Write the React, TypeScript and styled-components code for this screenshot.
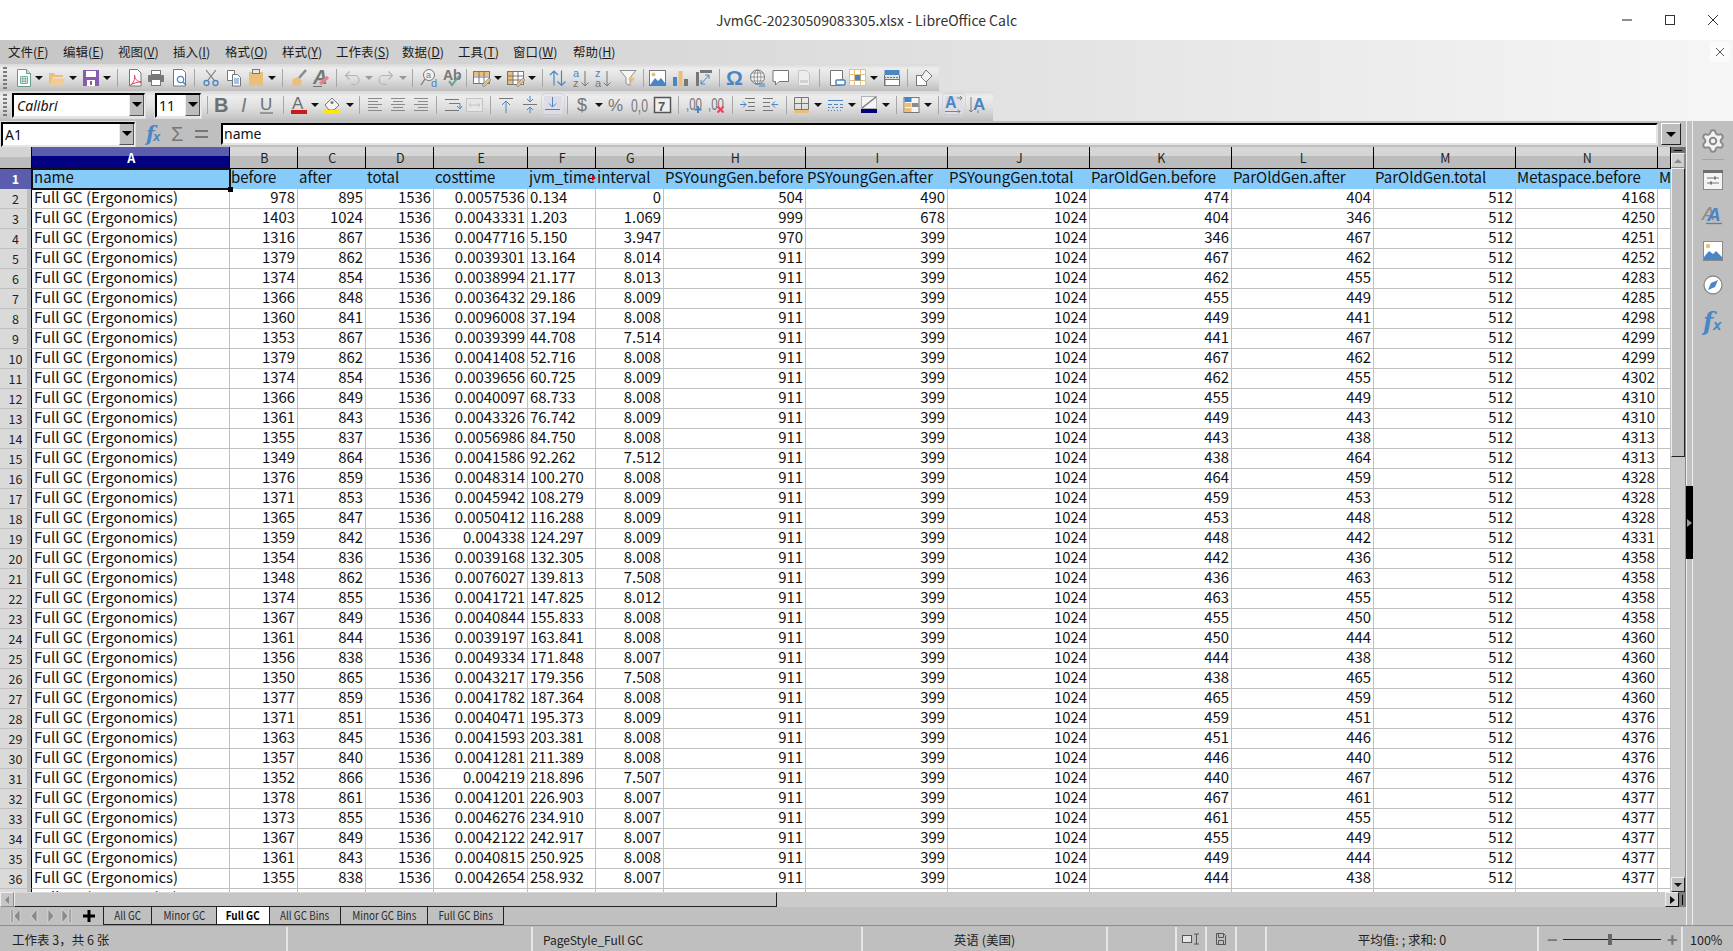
import React from "react";
import styled, { createGlobalStyle } from "styled-components";
import { Settings } from "lucide-react";

const BL = "#4a86c4", TN = "#e9bf7b", GR = "#777777", TE = "#5f9f88", PU = "#8a5aad", RD = "#e8415a", DIS = "#b4b4b4";
const FONT = `"Noto Sans CJK SC", "Noto Sans", sans-serif`;

const Global = createGlobalStyle`
  html, body { margin: 0; padding: 0; background: #c0c0c0; overflow: hidden; }
  body { font-family: ${FONT}; }
  * { box-sizing: border-box; }
`;

const Page = styled.div`
  width: 1733px; height: 951px; display: flex; flex-direction: column; overflow: hidden; background: #c0c0c0; color: #111;
`;
const TitleBar = styled.header`
  height: 40px; flex: none; background: #fff; display: flex; align-items: center; justify-content: center; position: relative;
`;
const TitleText = styled.div`font-size: 14px; color: #333;`;
const WinControls = styled.div`
  position: absolute; right: 13px; top: 14px; display: flex; gap: 29px; align-items: center;
`;
const Chrome = styled.div`
  height: 81px; flex: none; background: linear-gradient(90deg, #c6c6c6 0%, #dcdcdc 45%, #f6f6f6 100%); display: flex; flex-direction: column; position: relative;
`;
const MenuBar = styled.nav`height: 24px; flex: none; display: flex; align-items: center; font-size: 12.5px; color: #1c1c1c; padding-bottom: 2px;`;
const MenuItem = styled.span<{ $w: number }>`width: ${p => p.$w}px; flex: none; white-space: nowrap; u { text-underline-offset: 1px; }`;
const CloseDoc = styled.div`
  position: absolute; right: 3px; top: 2px; width: 20px; height: 20px; background: #fbfbfb; display: flex; align-items: center; justify-content: center;
`;
const Strip = styled.div<{ $w: number; $h: number; $pb: number }>`
  width: ${p => p.$w}px; height: ${p => p.$h}px; padding-bottom: ${p => p.$pb}px; flex: none; display: flex; align-items: center;
  background: linear-gradient(180deg, #d9d9d9 0%, #ededed 18%, #dfdfdf 55%, #c6c6c6 90%, #bdbdbd 100%);
`;
const Slot = styled.div<{ $w: number }>`
  width: ${p => p.$w}px; flex: none; height: 100%; display: flex; align-items: center;
`;
const IconBox = styled.div<{ $active?: boolean }>`
  width: 18px; height: 18px; flex: none; display: flex;
  ${p => p.$active ? "background:#dcdde6; outline: 1px solid #d0d3e4; outline-offset: 2px; border-radius:1px;" : ""}
`;
const Drop = styled.div<{ $off?: boolean }>`
  width: 0; height: 0; border-left: 4px solid transparent; border-right: 4px solid transparent; border-top: 4px solid ${p => p.$off ? "#9a9a9a" : "#111"};
`;
const Sep = styled.div`width: 1px; height: 18px; background: #a6a6a6;`;
const Handle = styled.div`
  width: 4px; height: 22px; background: repeating-linear-gradient(180deg, #7a7a7a 0 2px, transparent 2px 4px);
`;
const Combo = styled.div<{ $w: number }>`
  width: ${p => p.$w}px; height: 25px; flex: none; display: flex; align-items: stretch; background: #fff;
  border-top: 2px solid #000; border-left: 2px solid #000; border-right: 1px solid #eee; border-bottom: 2px solid #e6e6e6;
  outline: 1px solid #dedede;
`;
const ComboText = styled.div<{ $it?: boolean }>`
  flex: 1; min-width: 0; font-size: 14px; line-height: 21px; padding-left: ${p => p.$it ? 3 : 2}px; font-style: ${p => p.$it ? "italic" : "normal"}; color: #111; white-space: nowrap; overflow: hidden;
  font-family: "Noto Sans", sans-serif;
`;
const ComboBtn = styled.div`
  width: 15px; flex: none; background: #bdbdbd; display: flex; align-items: center; justify-content: center;
  border-left: 1px solid #eee; border-right: 1px solid #555; border-bottom: 1px solid #555;
`;
const BlackDrop = styled.div`width: 0; height: 0; border-left: 5px solid transparent; border-right: 5px solid transparent; border-top: 5px solid #000;`;

const Body = styled.div`height: 804px; flex: none; display: flex;`;
const Workspace = styled.div`width: 1686px; flex: none; display: flex; flex-direction: column;`;
const NameBar = styled.div`height: 26px; flex: none; display: flex; align-items: center; background: #bfbfbf;`;
const NameCombo = styled(Combo)`margin-left: 1px; height: 25px;`;
const FormulaTools = styled.div`width: 86px; flex: none; display: flex; align-items: center; height: 100%; padding-left: 7px;`;
const FormulaInput = styled.div`
  width: 1437px; height: 22px; flex: none; background: #fff; border-top: 2px solid #000; border-left: 2px solid #000; border-bottom: 2px solid #e4e4e4; border-right: 2px solid #e4e4e4;
  font-size: 14px; line-height: 18px; padding-left: 1px; color: #111; font-family: "Noto Sans", sans-serif;
`;
const FormulaBtn = styled.div`
  width: 20px; height: 22px; margin-left: 3px; flex: none; background: #bdbdbd; border: 1px solid #fff; border-right: 1px solid #222; border-bottom: 1px solid #222; display: flex; align-items: center; justify-content: center;
`;
const FBig = styled.span`width: 24px; display: flex; justify-content: center;`;

const Sheet = styled.div`height: 745px; flex: none; display: flex;`;
const GridArea = styled.div`width: 1671px; flex: none; overflow: hidden; background: #fff;`;
const COLS = "32px 198px 68px 68px 68px 94px 68px 68px 142px 142px 142px 142px 142px 142px 142px 13px";
const HeadRow = styled.div`
  display: grid; grid-template-columns: ${COLS}; height: 22px; border-bottom: 1px solid #000;
`;
const Corner = styled.div`background: linear-gradient(180deg, #d4d4d4 0 50%, #bcbcbc 50%); border-right: 1px solid #000; `;
const ColHead = styled.div<{ $sel?: boolean }>`
  font-size: 12.5px; display: flex; align-items: center; justify-content: center; padding-top: 2px; padding-left: 1.5px; line-height: 1;
  color: ${p => p.$sel ? "#fff" : "#1f1f1f"}; font-weight: ${p => p.$sel ? 700 : 400};
  border-right: 1px solid #000;
  background: ${p => p.$sel ? "linear-gradient(180deg, #5c5cad 0 42%, #000080 42%)" : "linear-gradient(180deg, #d6d6d6 0 45%, #bcbcbc 45%)"};
`;
const Row = styled.div`display: grid; grid-template-columns: ${COLS}; height: 20px;`;
const RowHead = styled.div<{ $sel?: boolean }>`
  font-size: 12.5px; display: flex; align-items: center; justify-content: center; padding-top: 1px; line-height: 1;
  color: ${p => p.$sel ? "#fff" : "#1f1f1f"}; font-weight: ${p => p.$sel ? 700 : 400};
  border-right: 1px solid #000; border-bottom: 1px solid ${p => p.$sel ? "#5c5cad" : "#c0c0c0"};
  background: ${p => p.$sel ? "#5c5cad" : "linear-gradient(90deg, #dadada 0 88%, #bdbdbd 88%)"};
`;
const Cell = styled.div<{ $num?: boolean }>`
  font-size: 14.9px; line-height: 15px; white-space: nowrap;
  text-align: ${p => p.$num ? "right" : "left"}; padding: 0 ${p => p.$num ? "2px" : "1px"} 0 ${p => p.$num ? "0" : "2px"};
  color: #111; font-family: ${FONT}; background: #fff;
  border-right: 1px solid #c0c0c0; border-bottom: 1px solid #c0c0c0;
`;
const HeadCell = styled.div`
  position: relative; min-width: 0; font-size: 15px; line-height: 15px; white-space: nowrap; padding-left: 1px;
  color: #111; font-family: ${FONT}; background: #87cbfb;
`;
const Clip = styled.div`overflow: hidden; width: 100%; height: 23px; margin-top: -4px; padding-top: 4px;`;
const SelCell = styled(HeadCell)`padding-left: 2px; outline: 2px solid #111; outline-offset: -1px; z-index: 2;`;
const FillHandle = styled.div`position: absolute; right: -3px; bottom: -3px; width: 5px; height: 5px; background: #000; z-index: 3;`;
const Overflow = styled.div`
  position: absolute; right: 0; top: 6px; width: 0; height: 0; border-left: 4px solid #e00000; border-top: 3.5px solid transparent; border-bottom: 3.5px solid transparent;
`;

const VScroll = styled.div`width: 15px; flex: none; display: flex; flex-direction: column; background: #c9c9c9; border-right: 1px solid #888;`;
const VSplit = styled.div`height: 6px; flex: none; background: #6e6e6e; display:flex; align-items:center; justify-content:center; &::after{content:""; width:8px; height:1px; background:#000;}`;
const VBtn = styled.div<{ $dark?: boolean }>`
  height: 15px; flex: none; display: flex; align-items: center; justify-content: center; background: ${p => p.$dark ? "#bdbdbd" : "#cfcfcf"};
  border-top: 1px solid #eee; border-left: 1px solid #eee; border-right: 1px solid ${p => p.$dark ? "#222" : "#888"}; border-bottom: 1px solid ${p => p.$dark ? "#222" : "#888"};
`;
const VThumb = styled.div`height: 289px; flex: none; background: #bcbcbc; border-top:1px solid #eee; border-left:1px solid #eee; border-right: 1px solid #222; border-bottom: 1px solid #222;`;
const VTrack = styled.div`flex: 1;`;
const TriUp = styled.div<{ $c?: string }>`width:0;height:0;border-left:4px solid transparent;border-right:4px solid transparent;border-bottom:4px solid ${p => p.$c ?? "#8a8a8a"};`;
const TriDown = styled.div`width:0;height:0;border-left:4px solid transparent;border-right:4px solid transparent;border-top:4px solid #111;`;

const HScroll = styled.div`height: 15px; flex: none; display: flex; background: #cbcbcb;`;
const HBtn = styled.div<{ $dark?: boolean }>`
  width: 14px; flex: none; display: flex; align-items: center; justify-content: center; background: ${p => p.$dark ? "#cfcfcf" : "#c6c6c6"};
  border-top: 1px solid #eee; border-left: 1px solid #eee; border-right: 1px solid ${p => p.$dark ? "#111" : "#8a8a8a"}; border-bottom: 1px solid ${p => p.$dark ? "#111" : "#8a8a8a"};
`;
const HThumb = styled.div`width: 763px; flex: none; background: #c6c6c6; border-bottom: 1px solid #222; border-right: 1px solid #222; border-left: 1px solid #eee; border-top: 1px solid #d8d8d8;`;
const HTrack = styled.div`flex: 1;`;
const HSplit = styled.div`width: 7px; flex: none; background: #7e7e7e; display:flex; align-items:center; justify-content:center; &::after{content:""; width:1px; height:10px; background:#000;}`;
const TriL = styled.div<{ $c?: string }>`width:0;height:0;border-top:4px solid transparent;border-bottom:4px solid transparent;border-right:4px solid ${p => p.$c ?? "#8a8a8a"};`;
const TriR = styled.div`width:0;height:0;border-top:4px solid transparent;border-bottom:4px solid transparent;border-left:5px solid #111;`;

const TabBar = styled.div`height: 18px; flex: none; display: flex; background: #c0c0c0;`;
const TabNav = styled.div`width: 103px; flex: none; display: flex; align-items: center; padding-left: 10px;`;
const Tab = styled.div<{ $w: number; $on?: boolean; $last?: boolean }>`
  width: ${p => p.$w}px; flex: none; height: 18px; display: flex; justify-content: center;
  background: ${p => p.$on ? "#fff" : "#c0c0c0"}; color: ${p => p.$on ? "#000" : "#2a2a2a"}; font-weight: ${p => p.$on ? 700 : 400};
  border-left: 1px solid #222; border-right: ${p => p.$last ? "1px solid #222" : "none"}; border-bottom: 1px solid #222;
`;
const TabLabel = styled.span`
  display: inline-block; flex: none; font-size: 11.5px; line-height: 17px; transform: scaleX(0.86); transform-origin: center; white-space: nowrap;
`;

const Splitter = styled.div`
  width: 7px; flex: none; position: relative; background: #c0c0c0; border-left: 1px solid #efefef; border-right: 1px solid #efefef;
`;
const SplitKnob = styled.div`
  position: absolute; left: -1px; right: -1px; top: 365px; height: 73px; background: #000; display: flex; align-items: center; justify-content: center;
  &::after { content: ""; width:0; height:0; border-top:4px solid transparent; border-bottom:4px solid transparent; border-left:5px solid #9a9a9a; }
`;
const Sidebar = styled.aside`
  width: 40px; flex: none; background: #bfbfbf; display: flex; flex-direction: column; align-items: center; padding-top: 10px;
`;
const SideBtn = styled.div<{ $mb: number }>`width: 20px; height: 20px; margin-bottom: ${p => p.$mb}px; display: flex; align-items: center; justify-content: center;`;
const SideSep = styled.div`width: 22px; height: 1px; background: #a4a4a4; margin-bottom: 10px;`;
const Gear = styled(Settings)`flex: none;`;

const Status = styled.footer`
  height: 26px; flex: none; display: flex; background: #bfbfbf; border-top: 1px solid #8c8c8c; font-size: 12.5px; color: #222;
`;
const StatusCell = styled.div<{ $w: number; $center?: boolean; $pl?: number; $end?: boolean }>`
  width: ${p => p.$w}px; flex: none; height: 24px; margin-top: 1px; display: flex; align-items: center; white-space: nowrap;
  justify-content: ${p => p.$center ? "center" : "flex-start"}; padding-left: ${p => p.$pl ?? 0}px;
  border-right: ${p => p.$end ? "none" : "2px solid #e6e6e6"};
`;
const PageStyleCell = styled(StatusCell)`font-size: 12px;`;
const ZoomCell = styled(StatusCell)`gap: 6px;`;
const ZoomSlider = styled.div`width: 98px; height: 1px; background: #222; position: relative;`;
const ZoomKnob = styled.div`position: absolute; left: 45px; top: -5px; width: 4px; height: 11px; background: #666;`;
const ZoomSign = styled.div`font-size: 18px; font-weight: 700; color: #777; width: 10px; text-align: center; line-height: 1;`;

const Svg = ({ children, s = 18 }: { children: React.ReactNode; s?: number }) => (
  <svg width={s} height={s} viewBox={`0 0 ${s} ${s}`} fill="none" style={{ overflow: "visible", display: "block" }}>{children}</svg>
);
const T = ({ ff, children, ...p }: any) => <text fontFamily={ff ?? "'Liberation Sans', sans-serif"} {...p}>{children}</text>;

const icons: Record<string, React.ReactNode> = {
  new: <><path d="M2.5 .5h9l4 4v13h-13z" fill="#fff" stroke={TE} /><path d="M11.5 .5v4h4" fill="#cfe6dc" stroke={TE} /><path d="M5.5 7.5h7v7h-7zM5.5 9.8h7M5.5 12.2h7M7.8 7.5v7M10.2 7.5v7" stroke={TE} strokeWidth=".8" /></>,
  open: <><path d="M1 15V4h5l1.5 2H15v2H5L3 15z" fill={TN} /><path d="M4 9.5h13L15 16H1.5z" fill="#f0cd94" /></>,
  save: <><rect x="1" y="1" width="16" height="16" fill={PU} /><rect x="4" y="2" width="10" height="6" fill="#fff" /><rect x="5" y="11" width="8" height="6" fill="#fff" /><rect x="8" y="12" width="2" height="4" fill={PU} /></>,
  pdf: <><path d="M3.5 .5h8l3.5 3.5v13h-11.5z" fill="#fff" stroke={GR} /><path d="M4.5 16c3-2 5-6 4-10 0 4 2.500 6.500 7 7-4 0-8 1-11 3z" stroke={RD} fill="#fff" /></>,
  print: <><rect x="4.500" y="1.500" width="9" height="4" fill="#fff" stroke={GR} /><rect x="1" y="6" width="16" height="7" rx="1" fill={GR} /><rect x="4.500" y="10.500" width="9" height="6" fill="#fff" stroke={GR} /></>,
  preview: <><path d="M2.500 .5h9l3 3v13.500h-12z" fill="#fff" stroke={GR} /><circle cx="9.500" cy="10.500" r="3.200" fill="#fff" stroke={BL} strokeWidth="1.200" /><path d="M12 13l3 3" stroke={BL} strokeWidth="1.500" /></>,
  cut: <><path d="M4 1l8 10M14 1L6 11" stroke={GR} strokeWidth="1.100" /><circle cx="4.500" cy="14" r="2.500" stroke={BL} strokeWidth="1.300" /><circle cx="13.500" cy="14" r="2.500" stroke={BL} strokeWidth="1.300" /></>,
  copy: <><path d="M2.500 1.500h7v10h-7z" fill="#fff" stroke={GR} /><path d="M7.500 5.500h5l3 3v8.500h-8z" fill="#fff" stroke={GR} /><path d="M9 10h5M9 12h5M9 14h5" stroke={BL} /></>,
  paste: <><rect x="2" y="3" width="14" height="14" fill={TN} /><rect x="5.500" y=".5" width="7" height="4" fill="#e8e8e8" stroke={GR} /></>,
  brush: <><path d="M16 1L9 9" stroke="#8a8a8a" strokeWidth="2.500" /><path d="M3 10l5-2 4 4-2 5H1l2-3-1-1.500z" fill={TN} /></>,
  clear: <><T x="1" y="15" fontSize="20" fontWeight="700" fontStyle="italic" fill={GR}>A</T><path d="M8 15l8-7" stroke="#e87f92" strokeWidth="3.500" /><path d="M1 17.500h9" stroke={GR} /></>,
  undo: <path d="M5.500 2.500L1.500 6.500l4 4M1.500 6.500h9a4.500 4.500 0 0 1 0 9H7" stroke={DIS} strokeWidth="1.200" />,
  redo: <path d="M12.500 2.500l4 4-4 4M16.500 6.500h-9a4.500 4.500 0 0 0 0 9H11" stroke={DIS} strokeWidth="1.200" />,
  find: <><circle cx="9" cy="6" r="5.500" fill="#f2f2f2" stroke={GR} /><path d="M5 10L1 16" stroke={GR} strokeWidth="1.300" /><T x="6" y="9" fontSize="9" fill={GR}>a</T><T x="11" y="18" fontSize="11" fill={BL}>d</T></>,
  spell: <><T x="0" y="11" fontSize="14" fontWeight="700" fill={GR}>Ab</T><path d="M6 12l3 4 7-9" stroke="#5ea88f" strokeWidth="2" /></>,
  rows: <><rect x=".5" y="2.500" width="16" height="12" fill="#fff" stroke={GR} /><rect x="1" y="3" width="15" height="4" fill={TN} /><path d="M6 3v11M11 3v11M1 8h15" stroke={GR} /><path d="M9 16l7-7 2 2-7 7z" fill={TN} stroke={GR} strokeWidth=".6" /></>,
  cols: <><rect x=".5" y="2.500" width="16" height="13" fill="#fff" stroke={GR} /><rect x="1" y="3" width="5" height="12" fill={TN} /><path d="M6 3v12M11 3v12M1 7h15M1 11h15" stroke={GR} /><path d="M9 16l7-7 2 2-7 7z" fill={TN} stroke={GR} strokeWidth=".6" /></>,
  sort: <path d="M5 16.500V2M1 6l4-4 4 4M12.500 1.500v15M8.500 12.500l4 4 4-4" stroke={BL} strokeWidth="1.200" />,
  asc: <><T x="0" y="8" fontSize="11" fill={BL}>a</T><T x="0" y="17.500" fontSize="11" fill={GR}>z</T><path d="M12 2v15M8.500 13.500l3.500 3.500 3.500-3.500" stroke={GR} /></>,
  desc: <><T x="0" y="8" fontSize="11" fill={BL}>z</T><T x="0" y="17.500" fontSize="11" fill={GR}>a</T><path d="M12 2v15M8.500 13.500l3.500 3.500 3.500-3.500" stroke={GR} /></>,
  filter: <><path d="M1 1.500h16l-6 7v8l-4-2v-6z" fill="#f6f6f6" stroke="#8f8f8f" /><path d="M14 5l-5 6h3l-2 6 6-8h-3z" fill={TN} /></>,
  image: <><rect x=".5" y="1.500" width="16" height="15" fill="#fff" stroke={GR} /><circle cx="4.500" cy="5.500" r="2" fill={TN} /><path d="M1 16l5-7 3 3 3-3 4 5v2z" fill={BL} /></>,
  chart: <><rect x="1" y="8" width="4" height="9" fill={BL} /><rect x="6.500" y="2" width="4" height="15" fill={TN} /><rect x="12" y="10" width="4" height="7" fill={GR} /></>,
  pivot: <><rect x="1" y="3" width="3" height="14" fill={GR} /><rect x="5" y="1" width="12" height="3" fill={GR} /><path d="M6 15l8-9M6 11v4h4M14 10V6h-4" stroke={BL} /></>,
  omega: <T x="-1" y="16" fontSize="21" fontWeight="700" fill={BL}>Ω</T>,
  link: <><circle cx="8.500" cy="8" r="7" fill="#f4f4f4" stroke={GR} /><path d="M1.500 8h14M8.500 1v14M3 4h11M3 12h11" stroke={GR} strokeWidth=".7" /><ellipse cx="8.500" cy="8" rx="3.500" ry="7" stroke={GR} strokeWidth=".7" /><path d="M6 15h10M10 17h6" stroke={BL} strokeWidth="1.200" /></>,
  comment: <path d="M1 1.500h15.500v11H7l-3.500 3.500v-3.500H1z" fill="#fff" stroke={GR} />,
  headers: <><path d="M3.500 1.500h8l3 3v12h-11z" fill="#ededed" stroke="#c6c6c6" /><rect x="5" y="11" width="8" height="3" fill="#d0d0d0" /></>,
  printarea: <><path d="M2.500 1.500h12v9h-2v6h-10z" fill="#fff" stroke={GR} /><rect x="8" y="11" width="9" height="5" rx="1" fill="#fff" stroke={BL} strokeWidth="1.500" /></>,
  freeze: <><rect x=".5" y=".5" width="16" height="16" fill="#fff" stroke={TN} /><path d="M5.500 1v15M11.500 1v15M1 5.500h15M1 11.500h15" stroke={TN} /><rect x="6" y="6" width="5.500" height="5.500" fill={BL} /></>,
  split: <><rect x=".5" y="1" width="15" height="5" fill={BL} /><path d="M0 8.500h16" stroke={GR} strokeDasharray="2 1" /><rect x="1" y="10.500" width="14.500" height="6" fill="#fff" stroke={GR} /><path d="M.5 6v11M15.500 6v11" stroke={GR} /></>,
  shapes: <><rect x="1.500" y="6.500" width="10" height="10" fill="#fff" stroke={GR} /><path d="M11 1l6 6-6 6-5-5z" fill="#f2f2f2" stroke={GR} /></>,
  B: <T x="0" y="15.500" fontSize="20" fontWeight="700" fill="#6f6f6f">B</T>,
  I: <T x="3" y="15.500" fontSize="20" fontStyle="italic" fill="#7d7d7d">I</T>,
  U: <><T x="1" y="13.500" fontSize="17" fill="#6f6f6f">U</T><path d="M1 17h13" stroke="#6f6f6f" strokeWidth="1.200" /></>,
  fcolor: <><T x="2" y="13" fontSize="17" fill="#6f6f6f">A</T><rect x="1" y="14" width="16" height="4" fill="#cc1a1a" /></>,
  hl: <><path d="M2 9l7-7 7 7-5 5H6z" fill="#f4f4f4" stroke={GR} /><circle cx="9" cy="6.500" r="1.500" fill={GR} /><rect x="1" y="14" width="16" height="4" fill="#ffe600" /></>,
  left: <path d="M2 2.500h14M2 5.500h10M2 8.500h14M2 11.500h10M2 14.500h14" stroke="#8a8a8a" />,
  center: <path d="M2 2.500h14M4 5.500h10M2 8.500h14M4 11.500h10M2 14.500h14" stroke="#8a8a8a" />,
  right: <path d="M2 2.500h14M6 5.500h10M2 8.500h14M6 11.500h10M2 14.500h14" stroke="#8a8a8a" />,
  wrap: <><path d="M1 3.500h14M1 14.500h14" stroke={GR} /><path d="M5 7.500h11v5M13 10l3 3 2-3" stroke={BL} /></>,
  merge: <><rect x=".5" y="2.500" width="16" height="13" fill="#e6e6e6" stroke="#c4c4c4" /><path d="M3 9h11M3 9l2-2M3 9l2 2M14 9l-2-2M14 9l-2 2" stroke="#c4c4c4" /></>,
  top: <><path d="M2 2.500h14" stroke={GR} /><path d="M9 17V5M5 9l4-4 4 4" stroke={BL} /></>,
  mid: <><path d="M2 8.500h14" stroke={GR} /><path d="M9 0v6M6 3l3 3 3-3M9 17v-6M6 14l3-3 3 3" stroke={BL} /></>,
  bot: <><path d="M1 13.500h15" stroke={GR} /><path d="M8.500 1v10M5 7.500l3.500 3.500 3.500-3.500" stroke={BL} /></>,
  dollar: <T x="2" y="15" fontSize="18" fill={GR}>$</T>,
  pct: <T x="0" y="15" fontSize="17" fill={GR}>%</T>,
  num: <T x="0" y="16" fontSize="19" fill={GR} textLength="17" lengthAdjust="spacingAndGlyphs">0,0</T>,
  date: <><rect x=".5" y="1.500" width="16" height="15" fill="#efefef" stroke="#555" strokeWidth="1.500" /><T x="4" y="15" fontSize="13" fontWeight="700" fill="#555">7</T></>,
  adddec: <><T x="0" y="14" fontSize="17" fill={GR} textLength="16" lengthAdjust="spacingAndGlyphs">,00</T><path d="M12 10v7M8.500 13.500h7" stroke={BL} strokeWidth="2" /></>,
  deldec: <><T x="0" y="14" fontSize="17" fill={GR} textLength="16" lengthAdjust="spacingAndGlyphs">,00</T><path d="M9.500 10.500l6 6M15.500 10.500l-6 6" stroke={RD} strokeWidth="2" /></>,
  indent: <><path d="M6 2.500h10M9 6.500h7M9 10.500h7M6 14.500h10" stroke={GR} /><path d="M1 8.500h6M4 5.500l3 3-3 3" stroke={BL} /></>,
  outdent: <><path d="M1 2.500h10M1 6.500h7M1 10.500h7M1 14.500h10" stroke={GR} /><path d="M16 8.500h-6M13 5.500l-3 3 3 3" stroke={BL} /></>,
  borders: <><path d="M1.500 1.500h14v12h-14zM8.500 1.500v12M1.500 7.500h14" stroke={GR} /><rect x="1" y="14" width="15" height="3" fill={TN} /></>,
  bstyle: <path d="M1 4.500h15M1 8.500h4M7 8.500h4M13 8.500h3M1 11.500h2M5 11.500h2M9 11.500h2M13 11.500h3M1 14.500h1M4 14.500h1M7 14.500h1M10 14.500h1M13 14.500h1" stroke={BL} />,
  bcolor: <><rect x=".5" y=".5" width="15" height="12" fill="#f5f5f5" stroke="#b4b4b4" /><path d="M1 12L15 1" stroke={GR} strokeWidth="1.300" /><rect y="13" width="16" height="4" fill="#000080" /></>,
  cond: <><rect x="1" y="1.500" width="15" height="15" fill="#f5f5f5" stroke={GR} /><rect x="1.500" y="2" width="7" height="4" fill={BL} /><rect x="1.500" y="7" width="7" height="4" fill={TN} /><rect x="1.500" y="12" width="7" height="4" fill={TN} /><rect x="9" y="7" width="6.500" height="4" fill="#8a8a8a" /></>,
  htext: <><T x="0" y="12" fontSize="16" fontWeight="700" fill={BL}>A</T><path d="M12 2h5M15 0l2 2-2 2M0 15.500h15M13 13.500l2 2-2 2" stroke={GR} strokeWidth=".9" /></>,
  vtext: <><T x="4" y="14" fontSize="17" fontWeight="700" fill={BL}>A</T><path d="M2 1v15M0 14l2 2 2-2M9 14v3" stroke={GR} strokeWidth=".9" /></>,
};

type Item = [number, string];
const STRIP1: Item[] = [[3,"handle"],[15,"new"],[35,"arrow"],[48,"open"],[69,"arrow"],[82,"save"],[103,"arrow"],[117,"sep"],[126,"pdf"],[147,"print"],[171,"preview"],[194,"sep"],[202,"cut"],[225,"copy"],[247,"paste"],[268,"arrow"],[282,"sep"],[290,"brush"],[312,"clear"],[336,"sep"],[344,"undo"],[365,"off"],[376,"redo"],[399,"off"],[412,"sep"],[420,"find"],[443,"spell"],[466,"sep"],[473,"rows"],[494,"arrow"],[507,"cols"],[528,"arrow"],[542,"sep"],[549,"sort"],[573,"asc"],[595,"desc"],[619,"filter"],[643,"sep"],[649,"image"],[672,"chart"],[695,"pivot"],[719,"sep"],[727,"omega"],[749,"link"],[772,"comment"],[795,"headers"],[819,"sep"],[828,"printarea"],[849,"freeze"],[870,"arrow"],[884,"split"],[907,"sep"],[915,"shapes"],[939,""]];
const STRIP2: Item[] = [[3,"handle"],[12,"font"],[155,"size"],[207,"sep"],[214,"B"],[238,"I"],[259,"U"],[283,"sep"],[290,"fcolor"],[311,"arrow"],[323,"hl"],[346,"arrow"],[359,"sep"],[366,"left"],[389,"center"],[412,"right"],[436,"sep"],[444,"wrap"],[466,"merge"],[490,"sep"],[497,"top"],[521,"mid"],[544,"bot*"],[567,"sep"],[575,"dollar"],[595,"arrow"],[608,"pct"],[631,"num"],[654,"date"],[678,"sep"],[686,"adddec"],[708,"deldec"],[732,"sep"],[739,"indent"],[762,"outdent"],[786,"sep"],[793,"borders"],[814,"arrow"],[827,"bstyle"],[848,"arrow"],[861,"bcolor"],[882,"arrow"],[896,"sep"],[903,"cond"],[924,"arrow"],[938,"sep"],[945,"htext*"],[969,"vtext"],[993,""]];

function renderItem(kind: string) {
  if (kind === "handle") return <Handle />;
  if (kind === "sep") return <Sep />;
  if (kind === "arrow") return <Drop />;
  if (kind === "off") return <Drop $off />;
  if (kind === "font") return <Combo $w={133}><ComboText $it>Calibri</ComboText><ComboBtn><BlackDrop /></ComboBtn></Combo>;
  if (kind === "size") return <Combo $w={46}><ComboText>11</ComboText><ComboBtn><BlackDrop /></ComboBtn></Combo>;
  const active = kind.endsWith("*");
  const name = active ? kind.slice(0, -1) : kind;
  return <IconBox $active={active}><Svg>{icons[name]}</Svg></IconBox>;
}

const ToolStrip = ({ items, h, pb }: { items: Item[]; h: number; pb: number }) => (
  <Strip $w={items[items.length - 1][0]} $h={h} $pb={pb}>
    <Slot $w={items[0][0]} />
    {items.slice(0, -1).map(([x, k], i) => (
      <Slot key={i} $w={items[i + 1][0] - x}>{renderItem(k)}</Slot>
    ))}
  </Strip>
);

const MENU: [string, string, number][] = [["文件","F",55],["编辑","E",55],["视图","V",55],["插入","I",52],["格式","O",57],["样式","Y",54],["工作表","S",66],["数据","D",56],["工具","T",55],["窗口","W",60],["帮助","H",60]];

const HEAD = ["name","before","after","total","costtime","jvm_time","interval","PSYoungGen.before","PSYoungGen.after","PSYoungGen.total","ParOldGen.before","ParOldGen.after","ParOldGen.total","Metaspace.before","M"];
const LETTERS = "ABCDEFGHIJKLMN".split("");

const RAW = `978 895 0.0057536 0.134 0 504 490 474 404 4168
1403 1024 0.0043331 1.203 1.069 999 678 404 346 4250
1316 867 0.0047716 5.150 3.947 970 399 346 467 4251
1379 862 0.0039301 13.164 8.014 911 399 467 462 4252
1374 854 0.0038994 21.177 8.013 911 399 462 455 4283
1366 848 0.0036432 29.186 8.009 911 399 455 449 4285
1360 841 0.0096008 37.194 8.008 911 399 449 441 4298
1353 867 0.0039399 44.708 7.514 911 399 441 467 4299
1379 862 0.0041408 52.716 8.008 911 399 467 462 4299
1374 854 0.0039656 60.725 8.009 911 399 462 455 4302
1366 849 0.0040097 68.733 8.008 911 399 455 449 4310
1361 843 0.0043326 76.742 8.009 911 399 449 443 4310
1355 837 0.0056986 84.750 8.008 911 399 443 438 4313
1349 864 0.0041586 92.262 7.512 911 399 438 464 4313
1376 859 0.0048314 100.270 8.008 911 399 464 459 4328
1371 853 0.0045942 108.279 8.009 911 399 459 453 4328
1365 847 0.0050412 116.288 8.009 911 399 453 448 4328
1359 842 0.004338 124.297 8.009 911 399 448 442 4331
1354 836 0.0039168 132.305 8.008 911 399 442 436 4358
1348 862 0.0076027 139.813 7.508 911 399 436 463 4358
1374 855 0.0041721 147.825 8.012 911 399 463 455 4358
1367 849 0.0040844 155.833 8.008 911 399 455 450 4358
1361 844 0.0039197 163.841 8.008 911 399 450 444 4360
1356 838 0.0049334 171.848 8.007 911 399 444 438 4360
1350 865 0.0043217 179.356 7.508 911 399 438 465 4360
1377 859 0.0041782 187.364 8.008 911 399 465 459 4360
1371 851 0.0040471 195.373 8.009 911 399 459 451 4376
1363 845 0.0041593 203.381 8.008 911 399 451 446 4376
1357 840 0.0041281 211.389 8.008 911 399 446 440 4376
1352 866 0.004219 218.896 7.507 911 399 440 467 4376
1378 861 0.0041201 226.903 8.007 911 399 467 461 4377
1373 855 0.0046276 234.910 8.007 911 399 461 455 4377
1367 849 0.0042122 242.917 8.007 911 399 455 449 4377
1361 843 0.0040815 250.925 8.008 911 399 449 444 4377
1355 838 0.0042654 258.932 8.007 911 399 444 438 4377`;

const ROWS = RAW.split("\n").map(l => {
  const [b, a, cost, jvm, iv, yb, ya, ob, oa, m] = l.split(" ");
  return [b, a, "1536", cost, jvm, iv, yb, ya, "1024", ob, oa, "512", m];
});

const TABS: [string, number][] = [["All GC",48],["Minor GC",65],["Full GC",53],["All GC Bins",71],["Minor GC Bins",87],["Full GC Bins",77]];

const NavIcon = ({ d }: { d: string }) => (
  <svg width="17" height="16" viewBox="0 0 17 16"><path d={d} fill="#8a8a8a" stroke="#e8e8e8" strokeWidth=".6" /></svg>
);

export default function App() {
  return (
    <Page>
      <Global />
      <TitleBar>
        <TitleText>JvmGC-20230509083305.xlsx - LibreOffice Calc</TitleText>
        <WinControls>
          <svg width="14" height="12" viewBox="0 0 14 12"><path d="M2 6h10" stroke="#333" strokeWidth="1.100" /></svg>
          <svg width="14" height="12" viewBox="0 0 14 12"><rect x="2.500" y="1.500" width="9" height="9" fill="none" stroke="#333" /></svg>
          <svg width="14" height="12" viewBox="0 0 14 12"><path d="M2 1l10 10M12 1L2 11" stroke="#333" /></svg>
        </WinControls>
      </TitleBar>
      <Chrome>
        <MenuBar>
          <MenuItem $w={8} />
          {MENU.map(([t, k, w]) => <MenuItem key={k} $w={w}>{t}(<u>{k}</u>)</MenuItem>)}
        </MenuBar>
        <CloseDoc><svg width="10" height="10" viewBox="0 0 10 10"><path d="M1 1l8 8M9 1L1 9" stroke="#555" /></svg></CloseDoc>
        <ToolStrip items={STRIP1} h={27} pb={0} />
        <ToolStrip items={STRIP2} h={30} pb={2} />
      </Chrome>
      <Body>
        <Workspace>
          <NameBar>
            <NameCombo $w={134}><ComboText>A1</ComboText><ComboBtn><BlackDrop /></ComboBtn></NameCombo>
            <FormulaTools>
              <FBig><Svg s={20}><T x="2" y="17" fontSize="20" fontWeight="700" fontStyle="italic" fill={BL} ff="'DejaVu Serif', serif">f</T><T x="9" y="17" fontSize="13" fontWeight="700" fontStyle="italic" fill={BL}>x</T></Svg></FBig>
              <FBig><Svg s={20}><T x="3" y="17" fontSize="20" fill={GR}>Σ</T></Svg></FBig>
              <FBig><Svg s={20}><path d="M3 7h13M3 13h13" stroke={GR} strokeWidth="2" /></Svg></FBig>
            </FormulaTools>
            <FormulaInput>name</FormulaInput>
            <FormulaBtn><BlackDrop /></FormulaBtn>
          </NameBar>
          <Sheet>
            <GridArea>
              <HeadRow>
                <Corner />
                {LETTERS.map((c, i) => <ColHead key={c} $sel={i === 0}>{c}</ColHead>)}
                <ColHead />
              </HeadRow>
              <Row>
                <RowHead $sel>1</RowHead>
                {HEAD.map((h, i) => {
                  if (i === 0) return <SelCell key={h}>{h}<FillHandle /></SelCell>;
                  if (h === "jvm_time") return <HeadCell key={h}><Clip>{h}</Clip><Overflow /></HeadCell>;
                  return <HeadCell key={h}><Clip>{h}</Clip></HeadCell>;
                })}
              </Row>
              {ROWS.map((r, idx) => (
                <Row key={idx}>
                  <RowHead>{idx + 2}</RowHead>
                  <Cell>Full GC (Ergonomics)</Cell>
                  {r.map((v, j) => <Cell key={j} $num={j !== 4}>{v}</Cell>)}
                  <Cell />
                </Row>
              ))}
              <Row>
                <RowHead>37</RowHead>
                <Cell>Full GC (Ergonomics)</Cell>
                {HEAD.slice(1).map((h) => <Cell key={h} />)}
              </Row>
            </GridArea>
            <VScroll>
              <VSplit />
              <VBtn><TriUp /></VBtn>
              <VThumb />
              <VTrack />
              <VBtn $dark><TriDown /></VBtn>
            </VScroll>
          </Sheet>
          <HScroll>
            <HBtn><TriL /></HBtn>
            <HThumb />
            <HTrack />
            <HBtn $dark><TriR /></HBtn>
            <HSplit />
          </HScroll>
          <TabBar>
            <TabNav>
              <NavIcon d="M1 1h2v14H1zM10 1v14L4 8z" />
              <NavIcon d="M10 1v14L4 8z" />
              <NavIcon d="M4 1v14l6-7z" />
              <NavIcon d="M1 1v14l6-7zM8 1h2v14H8z" />
              <svg width="22" height="16" viewBox="0 0 22 16"><path d="M11 2v12M5 8h12" stroke="#000" strokeWidth="3" /></svg>
            </TabNav>
            {TABS.map(([t, w], i) => <Tab key={t} $w={w} $on={i === 2} $last={i === 5}><TabLabel>{t}</TabLabel></Tab>)}
          </TabBar>
        </Workspace>
        <Splitter><SplitKnob /></Splitter>
        <Sidebar>
          <SideBtn $mb={8}><Gear size={26} color="#8a8a8a" fill="#f2f2f2" strokeWidth={1.8} /></SideBtn>
          <SideSep />
          <SideBtn $mb={15}><Svg s={20}><rect x=".5" y=".5" width="19" height="19" fill="#f4f4f4" stroke="#8a8a8a" /><rect y="0" width="20" height="3" fill="#6e6e6e" /><path d="M4 8h12M4 13h12" stroke="#777" /><rect x="11" y="6.500" width="2" height="3" fill="#777" /><rect x="7" y="11.500" width="2" height="3" fill="#777" /></Svg></SideBtn>
          <SideBtn $mb={16}><Svg s={20}><T x="-1" y="15" fontSize="19" fontStyle="italic" fill="#8a8a8a">A</T><T x="4" y="16" fontSize="19" fontWeight="700" fontStyle="italic" fill={BL}>A</T><path d="M3 18.500h16" stroke={BL} strokeWidth="1.300" /></Svg></SideBtn>
          <SideBtn $mb={14}><Svg s={20}><rect x=".5" y=".5" width="19" height="19" fill="#fff" stroke="#8a8a8a" /><circle cx="5" cy="5" r="2.200" fill={TN} /><path d="M1 19v-3l5-6 4 3 3-3 6 6v3z" fill={BL} /></Svg></SideBtn>
          <SideBtn $mb={17}><Svg s={20}><circle cx="10" cy="10" r="9" fill="#fff" stroke="#8a8a8a" strokeWidth="1.300" /><path d="M15 5l-3 7-7 3 3-7z" fill={BL} /></Svg></SideBtn>
          <SideBtn $mb={0}><Svg s={20}><T x="0" y="18" fontSize="24" fontWeight="700" fontStyle="italic" fill={BL} ff="'DejaVu Serif', serif">f</T><T x="10" y="18" fontSize="15" fontWeight="700" fontStyle="italic" fill={BL}>x</T></Svg></SideBtn>
        </Sidebar>
      </Body>
      <Status>
        <StatusCell $w={288} $pl={12}>工作表 3，共 6 张</StatusCell>
        <StatusCell $w={245} />
        <PageStyleCell $w={330} $pl={10}>PageStyle_Full GC</PageStyleCell>
        <StatusCell $w={245} $center>英语 (美国)</StatusCell>
        <StatusCell $w={69} />
        <StatusCell $w={30} $center><svg width="18" height="14" viewBox="0 0 18 14"><rect x=".5" y="3.500" width="9" height="7" fill="#e6e6e6" stroke="#555" /><path d="M12 2h5M12 12h5M14.500 2v10" stroke="#555" /></svg></StatusCell>
        <StatusCell $w={30} $center><svg width="12" height="14" viewBox="0 0 12 14"><path d="M1.500 1.500h7l2 2v9h-9zM3.500 1.500v4h5v-4M3.500 12.500v-4h5v4" fill="none" stroke="#555" /></svg></StatusCell>
        <StatusCell $w={30} />
        <StatusCell $w={272} $center>平均值: ; 求和: 0</StatusCell>
        <ZoomCell $w={144} $pl={8}>
          <ZoomSign>−</ZoomSign>
          <ZoomSlider><ZoomKnob /></ZoomSlider>
          <ZoomSign>+</ZoomSign>
        </ZoomCell>
        <StatusCell $w={50} $pl={7} $end>100%</StatusCell>
      </Status>
    </Page>
  );
}
